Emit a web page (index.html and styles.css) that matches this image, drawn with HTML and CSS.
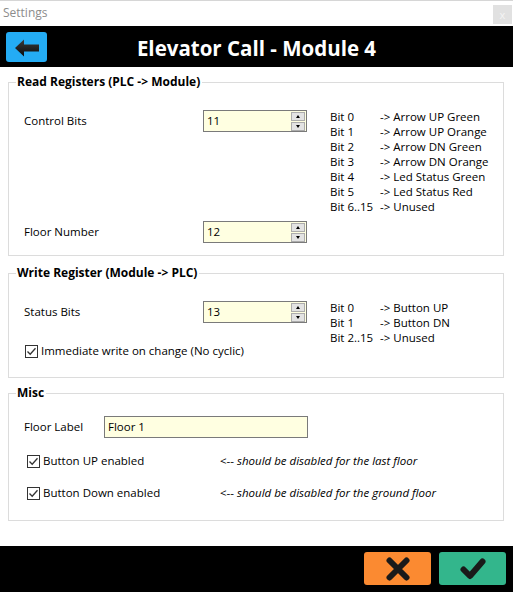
FILE: index.html
```html
<!DOCTYPE html>
<html>
<head>
<meta charset="utf-8">
<link rel="stylesheet" href="styles.css">
</head>
<body>
<div class="window">
  <div class="titlebar">
    <span class="wtitle">Settings</span>
    <span class="close">x</span>
  </div>
  <div class="header">
    <div class="hleft">
      <button class="back" type="button">
        <svg width="41" height="30" viewBox="0 0 41 30">
          <defs>
            <linearGradient id="ag" x1="0" y1="0" x2="0" y2="1">
              <stop offset="0" stop-color="#3a3a3a"/>
              <stop offset="1" stop-color="#0a0a0a"/>
            </linearGradient>
          </defs>
          <path d="M9 16 L18 7.5 L18 12.5 L33 12.5 L33 19.5 L18 19.5 L18 24.5 Z" fill="url(#ag)"/>
        </svg>
      </button>
    </div>
    <h1 class="htitle">Elevator Call - Module 4</h1>
    <div class="hright"></div>
  </div>

  <div class="content">
    <fieldset class="group g1">
      <legend>Read Registers (PLC -&gt; Module)</legend>
      <div class="grid">
        <div class="lbl">Control Bits</div>
        <div class="spin"><span class="val">11</span><span class="spinbtns"><span class="sb up"></span><span class="sb dn"></span></span></div>
        <div class="bits">
          <span>Bit 0</span><span>-&gt; Arrow UP Green</span>
          <span>Bit 1</span><span>-&gt; Arrow UP Orange</span>
          <span>Bit 2</span><span>-&gt; Arrow DN Green</span>
          <span>Bit 3</span><span>-&gt; Arrow DN Orange</span>
          <span>Bit 4</span><span>-&gt; Led Status Green</span>
          <span>Bit 5</span><span>-&gt; Led Status Red</span>
          <span>Bit 6..15</span><span>-&gt; Unused</span>
        </div>
        <div class="lbl">Floor Number</div>
        <div class="spin"><span class="val">12</span><span class="spinbtns"><span class="sb up"></span><span class="sb dn"></span></span></div>
      </div>
    </fieldset>

    <fieldset class="group g2">
      <legend>Write Register (Module -&gt; PLC)</legend>
      <div class="grid grid2">
        <div class="lbl">Status Bits</div>
        <div class="spin"><span class="val">13</span><span class="spinbtns"><span class="sb up"></span><span class="sb dn"></span></span></div>
        <div class="bits bits2">
          <span>Bit 0</span><span>-&gt; Button UP</span>
          <span>Bit 1</span><span>-&gt; Button DN</span>
          <span>Bit 2..15</span><span>-&gt; Unused</span>
        </div>
        <label class="chk wide"><span class="box"><svg width="11" height="11" viewBox="0 0 11 11"><path d="M1.5 5.5 L4.2 8.3 L9.5 2.2" fill="none" stroke="#333" stroke-width="1.3"/></svg></span>Immediate write on change (No cyclic)</label>
      </div>
    </fieldset>

    <fieldset class="group g3">
      <legend>Misc</legend>
      <div class="misc">
        <div class="row">
          <div class="lbl lbl3">Floor Label</div>
          <div class="text">Floor 1</div>
        </div>
        <div class="row crow">
          <label class="chk c3"><span class="box"><svg width="11" height="11" viewBox="0 0 11 11"><path d="M1.5 5.5 L4.2 8.3 L9.5 2.2" fill="none" stroke="#333" stroke-width="1.3"/></svg></span>Button UP enabled</label>
          <span class="note">&lt;-- <i>should be disabled for the last floor</i></span>
        </div>
        <div class="row crow">
          <label class="chk c3"><span class="box"><svg width="11" height="11" viewBox="0 0 11 11"><path d="M1.5 5.5 L4.2 8.3 L9.5 2.2" fill="none" stroke="#333" stroke-width="1.3"/></svg></span>Button Down enabled</label>
          <span class="note">&lt;-- <i>should be disabled for the ground floor</i></span>
        </div>
      </div>
    </fieldset>
  </div>

  <div class="footer">
    <button class="fbtn cancel" type="button">
      <svg width="24" height="24" viewBox="0 0 24 24">
        <path d="M3.5 3.5 L20.5 20.5 M20.5 3.5 L3.5 20.5" stroke="#1a1a1a" stroke-width="6" stroke-linecap="round"/>
      </svg>
    </button>
    <button class="fbtn ok" type="button">
      <svg width="26" height="22" viewBox="0 0 26 22">
        <path d="M3.5 11.5 L10 18 L22.5 3.5" fill="none" stroke="#1a1a1a" stroke-width="6" stroke-linejoin="round" stroke-linecap="round"/>
      </svg>
    </button>
  </div>
</div>
</body>
</html>
```

FILE: styles.css
```css
* { box-sizing: border-box; }
html, body { margin: 0; padding: 0; background: #fff; }
body {
  font-family: "Open Sans", "Noto Sans", sans-serif;
  font-size: 11.5px;
  color: #000;
}
.window {
  width: 513px;
  height: 592px;
  display: flex;
  flex-direction: column;
  border-top: 1px solid #d6d6d6;
}
.window > * { flex-shrink: 0; }
.titlebar {
  height: 25px;
  display: flex;
  align-items: center;
  justify-content: space-between;
  padding: 0 1px 0 3px;
}
.wtitle { color: #8c8c8c; font-size: 12px; margin-top: -2px; }
.close {
  width: 19px;
  height: 19px;
  background: #e1e1e1;
  color: #f4f4f4;
  font-size: 11px;
  display: flex;
  align-items: center;
  justify-content: center;
  margin-top: 2px;
}
.header {
  background: #000;
  height: 41px;
  display: grid;
  grid-template-columns: 1fr auto 1fr;
  align-items: center;
}
.hleft { padding-left: 6px; display: flex; }
.back {
  width: 41px;
  height: 30px;
  background: #24acf4;
  border: none;
  border-radius: 3px;
  padding: 0;
  display: block;
  margin-top: 1px;
}
.back svg { display: block; }
.htitle {
  margin: 0;
  color: #fff;
  font-size: 20.5px;
  font-weight: 700;
  line-height: 24px;
  margin-top: 2px;
}
.content { padding: 0 9px 0 8px; }
.group {
  border: 1px solid #dcdcdc;
  margin: 0;
  padding: 0;
  min-width: 0;
}
.group legend {
  font-weight: 700;
  font-size: 12px;
  line-height: 16px;
  padding: 0 2px 0 1px;
  margin-left: 7px;
}
.g1 { margin-top: 7px; padding-bottom: 12px; }
.g2 { margin-top: 9px; padding-bottom: 19px; }
.g3 { margin-top: 7px; padding-bottom: 20px; }

.grid {
  display: grid;
  grid-template-columns: 179px 104px 1fr;
  row-gap: 7px;
  padding: 20px 0 0 15px;
  align-items: start;
}
.lbl { line-height: 21px; height: 21px; }
.spin {
  height: 22px;
  width: 104px;
  border: 1px solid #7a7a7a;
  background: #ffffe1;
  display: flex;
  align-items: center;
  justify-content: space-between;
  padding: 0 1px 0 3px;
}
.val { line-height: 18px; }
.spinbtns { display: flex; flex-direction: column; gap: 1px; }
.sb {
  width: 14px;
  height: 9px;
  background: #e3e3e3;
  border: 1px solid #acacac;
  position: relative;
}
.sb::after {
  content: "";
  position: absolute;
  left: 4px;
  border-left: 2.5px solid transparent;
  border-right: 2.5px solid transparent;
}
.sb.up::after { top: 2px; border-bottom: 3px solid #000; }
.sb.dn::after { top: 2px; border-top: 3px solid #000; }

.bits {
  display: grid;
  grid-template-columns: 50px auto;
  line-height: 15px;
  margin: -1px 0 0 23px;
  white-space: nowrap;
  height: 105px;
}
.grid2 { row-gap: 21px; }
.grid2 .bits2 { grid-row: span 2; height: auto; }
.chk {
  display: flex;
  align-items: center;
  line-height: 14px;
  height: 14px;
  white-space: nowrap;
}
.wide { grid-column: 1 / 3; margin-left: 1px; }
.box {
  width: 13px;
  height: 13px;
  border: 1px solid #333;
  background: #fff;
  margin-right: 3px;
  display: flex;
  align-items: center;
  justify-content: center;
  flex-shrink: 0;
}
.box svg { display: block; }

.misc { padding: 15px 0 0 15px; display: flex; flex-direction: column; }
.row { display: flex; align-items: center; }
.lbl3 { width: 80px; line-height: 22px; height: 22px; }
.text {
  width: 204px;
  height: 22px;
  border: 1px solid #7a7a7a;
  background: #ffffe1;
  padding: 0 3px;
  line-height: 20px;
}
.crow { margin-top: 16px; height: 14px; }
.crow + .crow { margin-top: 18px; }
.c3 { width: 193px; margin-left: 3px; }
.note { line-height: 14px; white-space: nowrap; }
.note i { font-style: italic; }

.footer {
  margin-top: auto;
  height: 46px;
  background: #000;
  display: flex;
  justify-content: flex-end;
  align-items: flex-start;
  gap: 8px;
  padding: 6px 7px 0 0;
}
.fbtn {
  width: 67px;
  height: 33px;
  border: none;
  border-radius: 3px;
  padding: 0;
  display: flex;
  align-items: center;
  justify-content: center;
}
.cancel { background: #fb8a31; }
.ok { background: #33b68c; }
.fbtn svg { display: block; }
```
